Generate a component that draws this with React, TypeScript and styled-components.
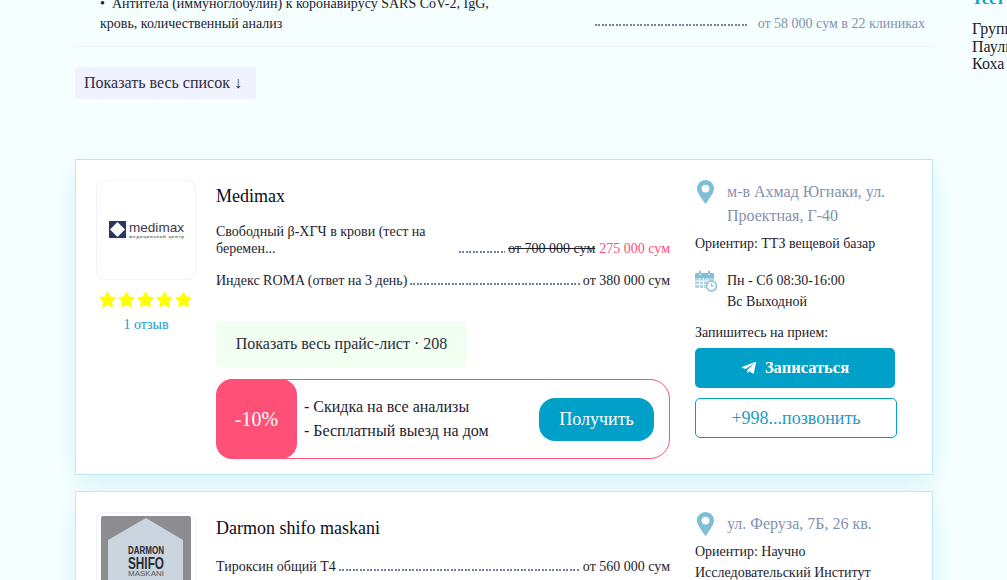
import React from "react";
import styled, { createGlobalStyle } from "styled-components";
import { FaStar, FaTelegramPlane } from "react-icons/fa";

const Global = createGlobalStyle`
  html, body {
    margin: 0;
    height: 580px;
    overflow: hidden;
    background: #f6ffff;
    font-family: "Liberation Serif", "Times New Roman", serif;
    color: #1c1c2e;
  }
`;

const Page = styled.div`
  display: flex;
  align-items: flex-start;
  width: 1007px;
  height: 580px;
  overflow: hidden;
  padding-left: 75px;
  box-sizing: border-box;
`;

const Main = styled.main`
  width: 858px;
  flex: none;
  margin-top: -6px;
`;

const Aside = styled.aside`
  flex: none;
  width: 60px;
  margin: -10px 0 0 39px;
  font-size: 16px;
  line-height: 17.6px;
  white-space: nowrap;
  overflow: hidden;
`;

const AsideTitle = styled.div`
  color: #00a0c8;
  font-weight: bold;
  height: 18px;
  margin-bottom: 12px;
`;

const ListRow = styled.div`
  display: flex;
  align-items: flex-end;
  padding: 0 8px 12px 25px;
  border-bottom: 1px solid #e6f5f7;
  font-size: 14px;
  line-height: 20px;
`;

const ListName = styled.div`
  width: 395px;
  flex: none;
  margin-right: 97px;
`;

const Leader = styled.span<{ $lift: number }>`
  flex: 1;
  min-width: 0;
  height: 2px;
  margin: 0 3px ${(p) => p.$lift}px;
  background: repeating-linear-gradient(90deg, #76819c 0 2px, transparent 2px 3.5px);
`;

const MutedPrice = styled.span`
  color: #8491ad;
  margin-left: 7px;
  white-space: nowrap;
`;

const ShowAll = styled.button`
  display: block;
  margin: 20px 0 60px;
  width: 181px;
  height: 32px;
  border: 0;
  border-radius: 3px;
  background: #f0f2ff;
  color: #2c2c3e;
  font: 16px "Liberation Serif", serif;
  text-align: left;
  padding: 0 9px;
`;

const Card = styled.article`
  display: flex;
  box-sizing: border-box;
  height: 316px;
  padding: 20px 35px 0 20px;
  margin-bottom: 16px;
  background: #fff;
  border: 1px solid #bfe9f2;
  box-shadow: 0 8px 24px rgba(0, 175, 210, 0.13);
`;

const LeftCol = styled.div`
  width: 100px;
  flex: none;
  margin-right: 20px;
  text-align: center;
`;

const LogoBox = styled.div`
  box-sizing: border-box;
  width: 100px;
  height: 100px;
  border: 1px solid #eef3ff;
  border-radius: 8px;
  display: flex;
  align-items: center;
  justify-content: center;
  overflow: hidden;
  padding: 3px;
`;

const Stars = styled.div`
  display: flex;
  justify-content: center;
  gap: 2px;
  margin: 11px 0 0 -1px;
  color: #ffff00;
  font-size: 17px;
  line-height: 0;
`;

const Reviews = styled.div`
  margin-top: 8px;
  font-size: 14px;
  line-height: 18px;
  color: #169ccb;
`;

const MidCol = styled.div`
  width: 454px;
  flex: none;
  margin-right: 25px;
`;

const ClinicName = styled.h3`
  margin: 5px 0 16px;
  font-size: 18px;
  line-height: 22px;
  font-weight: normal;
  color: #0c0c1c;
`;

const PriceRow = styled.div`
  display: flex;
  align-items: flex-end;
  min-height: 20px;
  font-size: 14px;
  line-height: 17px;
  margin-bottom: 12px;
`;

const PriceName = styled.div<{ $wrap?: boolean }>`
  flex: none;
  width: ${(p) => (p.$wrap ? "240px" : "auto")};
`;

const Price = styled.span`
  white-space: nowrap;
`;

const OldPrice = styled.s`
  white-space: nowrap;
`;

const NewPrice = styled.span`
  color: #ff5078;
  white-space: nowrap;
  margin-left: 4px;
`;

const PriceList = styled.button`
  display: block;
  width: 251px;
  height: 46px;
  margin: 32px 0 12px;
  border: 0;
  border-radius: 5px;
  background: #f0fff0;
  color: #2c2c3e;
  font: 16px "Liberation Serif", serif;
`;

const Offer = styled.div`
  display: flex;
  align-items: center;
  box-sizing: border-box;
  height: 80px;
  border: 1px solid #ff5078;
  border-radius: 20px;
  padding-right: 15px;
`;

const Discount = styled.div`
  width: 81px;
  height: 80px;
  margin-left: -1px;
  flex: none;
  background: #ff5078;
  border-radius: 16px;
  color: #fff;
  font-size: 20px;
  display: flex;
  align-items: center;
  justify-content: center;
`;

const OfferText = styled.div`
  flex: 1;
  margin-left: 7px;
  font-size: 16px;
  line-height: 24px;
`;

const GetButton = styled.button`
  width: 115px;
  height: 43px;
  border: 0;
  border-radius: 16px;
  background: #00a0c8;
  color: #fff;
  font: 18px "Liberation Serif", serif;
`;

const RightCol = styled.div`
  width: 202px;
  flex: none;
  font-size: 14px;
`;

const AddressRow = styled.div`
  display: flex;
  gap: 13px;
  padding-left: 2px;
`;

const Address = styled.div`
  color: #8491ad;
  font-size: 16px;
  line-height: 24px;
`;

const Landmark = styled.div`
  margin-top: 5px;
  line-height: 21px;
`;

const ScheduleRow = styled.div`
  display: flex;
  gap: 9px;
  margin-top: 16px;
`;

const Schedule = styled.div`
  line-height: 21px;
`;

const Prompt = styled.div`
  margin-top: 12px;
  line-height: 18px;
`;

const BookButton = styled.button`
  display: flex;
  align-items: center;
  justify-content: center;
  gap: 8px;
  width: 200px;
  height: 40px;
  margin-top: 6px;
  border: 0;
  border-radius: 5px;
  background: #00a0c8;
  color: #fff;
  font: bold 16.5px "Liberation Serif", serif;
`;

const CallButton = styled.button`
  display: block;
  box-sizing: border-box;
  width: 202px;
  height: 40px;
  margin-top: 10px;
  border: 1px solid #00a0c8;
  border-radius: 5px;
  background: #fff;
  color: #1f9bc4;
  font: 18px "Liberation Serif", serif;
`;

const Pin = () => (
  <svg width="17" height="24" viewBox="0 0 17 24" style={{ flex: "none" }}>
    <path
      fillRule="evenodd"
      fill="#7fbfd6"
      d="M8.5 0C3.8 0 0 3.8 0 8.4c0 2.2 1 4.3 2.2 6.3 1.6 2.8 4.5 6.7 6.3 9.3 1.8-2.6 4.7-6.5 6.3-9.3C16 12.7 17 10.6 17 8.4 17 3.8 13.2 0 8.5 0zm0 4.7a3.9 3.9 0 1 1 0 7.8 3.9 3.9 0 0 1 0-7.8z"
    />
  </svg>
);

const CalendarClock = () => (
  <svg width="23" height="22" viewBox="0 0 23 22" style={{ flex: "none" }}>
    <path fill="#7fbfd6" d="M1.5 3H4v2h2V3h7v2h2V3h2.5A1.5 1.5 0 0 1 19 4.5V8H0V4.5A1.5 1.5 0 0 1 1.5 3z" />
    <rect x="4" y="0.5" width="2" height="4" rx="1" fill="#7fbfd6" />
    <rect x="13" y="0.5" width="2" height="4" rx="1" fill="#7fbfd6" />
    <path fill="#a9d5e5" d="M0 8h19v5h-5a5 5 0 0 0-3.5 5H1.5A1.5 1.5 0 0 1 0 16.5z" />
    <path stroke="#fff" strokeWidth="1" d="M4.5 8v10M8.5 8v10M12.5 8v5M0 11h19M0 14.5h11" />
    <circle cx="16.5" cy="16" r="5" fill="#fff" stroke="#7fbfd6" strokeWidth="1.4" />
    <path d="M16.5 13.3V16h2.6" fill="none" stroke="#7fbfd6" strokeWidth="1.2" />
  </svg>
);

const MedimaxLogo = () => (
  <svg width="80" height="22" viewBox="0 0 80 22">
    <rect x="3" y="2" width="17" height="17" fill="#2d3560" />
    <path d="M11.5 3l7.5 7.5-7.5 7.5L4 10.5z" fill="#fff" />
    <text x="23" y="12.5" fontFamily="Liberation Sans, sans-serif" fontSize="13.5" textLength="55" lengthAdjust="spacingAndGlyphs" fill="#3a3a4a">
      medimax
    </text>
    <text x="23" y="18.5" fontFamily="Liberation Sans, sans-serif" fontSize="4.4" fontWeight="bold" textLength="55" fill="#666">
      медицинский центр
    </text>
  </svg>
);

const DarmonLogo = () => (
  <svg width="92" height="92" viewBox="0 0 92 92">
    <rect x="1" width="90" height="92" rx="2" fill="#8d8c8e" />
    <path d="M46 2l37 22v68H8V24z" fill="#cbd5e0" />
    <g fontFamily="Liberation Sans, sans-serif" textAnchor="middle" fill="#2b2b2f">
      <text x="46" y="38" fontSize="11" fontWeight="bold" textLength="36" lengthAdjust="spacingAndGlyphs">DARMON</text>
      <text x="46" y="53" fontSize="17" fontWeight="bold" textLength="36" lengthAdjust="spacingAndGlyphs">SHIFO</text>
      <text x="46" y="60" fontSize="7" fill="#555" textLength="36" lengthAdjust="spacingAndGlyphs">MASKANI</text>
    </g>
  </svg>
);

const Rating = () => (
  <Stars>
    {[0, 1, 2, 3, 4].map((i) => (
      <FaStar key={i} />
    ))}
  </Stars>
);

export default function App() {
  return (
    <Page>
      <Global />
      <Main>
        <ListRow>
          <ListName>•&nbsp; Антитела (иммуноглобулин) к коронавирусу SARS CoV-2, IgG, кровь, количественный анализ</ListName>
          <Leader $lift={8} />
          <MutedPrice>от 58 000 сум в 22 клиниках</MutedPrice>
        </ListRow>
        <ShowAll>Показать весь список ↓</ShowAll>

        <Card>
          <LeftCol>
            <LogoBox>
              <MedimaxLogo />
            </LogoBox>
            <Rating />
            <Reviews>1 отзыв</Reviews>
          </LeftCol>
          <MidCol>
            <ClinicName>Medimax</ClinicName>
            <PriceRow>
              <PriceName $wrap>Свободный β-ХГЧ в крови (тест на беремен...</PriceName>
              <Leader $lift={4} />
              <OldPrice>от 700 000 сум</OldPrice>
              <NewPrice>275 000 сум</NewPrice>
            </PriceRow>
            <PriceRow>
              <PriceName>Индекс ROMA (ответ на 3 день)</PriceName>
              <Leader $lift={4} />
              <Price>от 380 000 сум</Price>
            </PriceRow>
            <PriceList>Показать весь прайс-лист · 208</PriceList>
            <Offer>
              <Discount>-10%</Discount>
              <OfferText>
                <div>- Скидка на все анализы</div>
                <div>- Бесплатный выезд на дом</div>
              </OfferText>
              <GetButton>Получить</GetButton>
            </Offer>
          </MidCol>
          <RightCol>
            <AddressRow>
              <Pin />
              <Address>м-в Ахмад Югнаки, ул. Проектная, Г-40</Address>
            </AddressRow>
            <Landmark>Ориентир: ТТЗ вещевой базар</Landmark>
            <ScheduleRow>
              <CalendarClock />
              <Schedule>
                <div>Пн - Сб 08:30-16:00</div>
                <div>Вс Выходной</div>
              </Schedule>
            </ScheduleRow>
            <Prompt>Запишитесь на прием:</Prompt>
            <BookButton>
              <FaTelegramPlane size={16} />
              Записаться
            </BookButton>
            <CallButton>+998...позвонить</CallButton>
          </RightCol>
        </Card>

        <Card>
          <LeftCol>
            <LogoBox>
              <DarmonLogo />
            </LogoBox>
          </LeftCol>
          <MidCol>
            <ClinicName>Darmon shifo maskani</ClinicName>
            <PriceRow>
              <PriceName>Тироксин общий T4</PriceName>
              <Leader $lift={4} />
              <Price>от 560 000 сум</Price>
            </PriceRow>
          </MidCol>
          <RightCol>
            <AddressRow>
              <Pin />
              <Address>ул. Феруза, 7Б, 26 кв.</Address>
            </AddressRow>
            <Landmark>Ориентир: Научно Исследовательский Институт</Landmark>
          </RightCol>
        </Card>
      </Main>
      <Aside>
        <AsideTitle>Тест</AsideTitle>
        <div>Группа</div>
        <div>Пауль</div>
        <div>Коха</div>
      </Aside>
    </Page>
  );
}
